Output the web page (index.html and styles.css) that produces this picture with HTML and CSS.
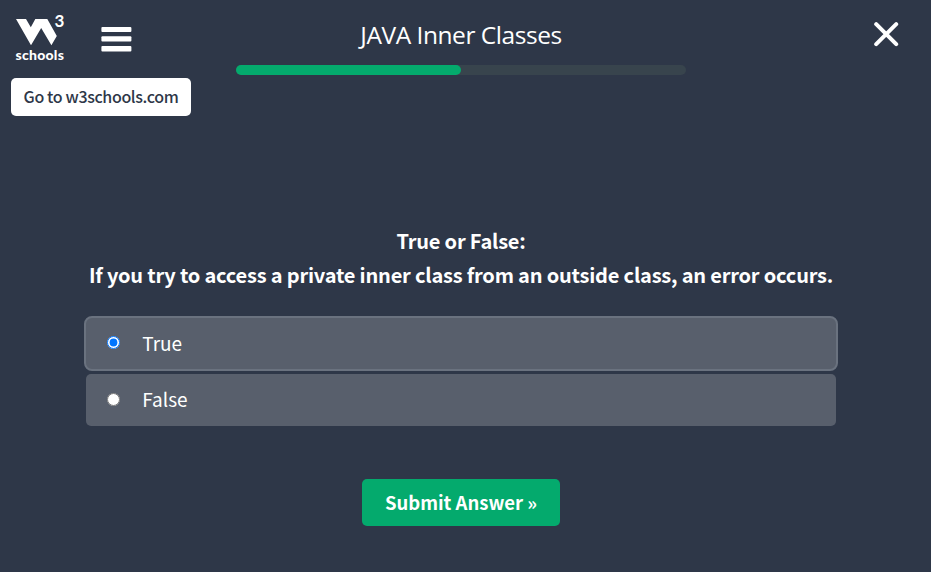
FILE: index.html
```html
<!DOCTYPE html>
<html lang="en">
<head>
<meta charset="utf-8">
<title>JAVA Inner Classes</title>
<link rel="stylesheet" href="styles.css">
</head>
<body>
<header class="header">
  <div class="brand">
    <a class="logo" aria-label="w3schools">
      <svg class="logo-mark" width="50" height="32" viewBox="0 0 50 32" aria-hidden="true">
        <path fill="#fff" d="M0 5h10l4.8 8.2L19.3 5h12l9.5 17-5.4 9.3L25.2 14 15 31.3z"/>
      </svg>
      <span class="logo-three">3</span>
      <span class="logo-name">schools</span>
    </a>
    <svg class="menu" width="31" height="25" viewBox="0 0 31 25" aria-label="Menu">
      <g fill="#fff"><rect x=".4" width="30" height="5" rx="1"/><rect x=".4" y="9.2" width="30" height="5.4" rx="1"/><rect x=".4" y="19" width="30" height="5.6" rx="1"/></g>
    </svg>
  </div>
  <div class="heading">
    <h1 class="title">JAVA Inner Classes</h1>
    <div class="progress"><div class="progress-fill"></div></div>
  </div>
  <svg class="close" width="25" height="25" viewBox="0 0 25 25" aria-label="Close">
    <path stroke="#fff" stroke-width="4" stroke-linecap="round" d="M2.2 2.2l20 20M22.2 2.2l-20 20"/>
  </svg>
</header>
<a class="home-link"><span>Go to w3schools.com</span></a>
<main class="quiz">
  <p class="question"><span class="lead">True or False:</span><br><span class="statement">If you try to access a private inner class from an outside class, an error occurs.</span></p>
  <label class="answer selected"><input class="radio" type="radio" name="answer" checked><span>True</span></label>
  <label class="answer"><input class="radio" type="radio" name="answer"><span>False</span></label>
  <button class="submit"><span>Submit Answer »</span></button>
</main>
</body>
</html>
```
FILE: styles.css
```css
* { box-sizing: border-box; }
body {
  margin: 0;
  height: 572px;
  overflow: hidden;
  background: #2e3748;
  color: #fff;
  font-family: "Noto Sans CJK SC", "Noto Sans", sans-serif;
}
.header {
  height: 78px;
  display: grid;
  grid-template-columns: 236px 450px 1fr;
}
.brand { display: flex; padding: 14px 0 0 16px; }
.logo { position: relative; width: 50px; height: 50px; margin-right: 35px; }
.logo-mark { display: block; }
.logo-three {
  position: absolute;
  left: 38.5px;
  top: -5px;
  font: 700 17px/24px Lato, sans-serif;
}
.logo-name {
  display: block;
  margin-left: -.5px;
  font: 900 14px/17px Lato, sans-serif;
  letter-spacing: .25px;
}
.menu { margin-top: 13px; }
.title {
  margin: 0;
  padding-top: 16px;
  height: 65px;
  font: 400 24.5px/38px "Open Sans", sans-serif;
  letter-spacing: -.46px;
  text-align: center;
}
.progress { height: 10px; border-radius: 5px; background: #38444d; }
.progress-fill { width: 50%; height: 10px; border-radius: 5px; background: #04aa6d; }
.close { justify-self: end; margin: 22px 32px 0 0; }
.home-link {
  display: flex;
  align-items: center;
  justify-content: center;
  width: 180px;
  height: 38px;
  margin-left: 11px;
  padding-bottom: 2px;
  border-radius: 5px;
  background: #fff;
  color: #2e3748;
  font-size: 16px;
  font-weight: 500;
  letter-spacing: -.37px;
  white-space: nowrap;
}
.quiz { width: 754px; margin: 108px 0 0 84px; }
.question {
  margin: 0;
  height: 92px;
  font-size: 20px;
  line-height: 34px;
  font-weight: 700;
  letter-spacing: -.195px;
  text-align: center;
  white-space: nowrap;
}
.answer {
  display: flex;
  align-items: center;
  height: 52px;
  margin: 0 2px;
  padding-bottom: 3px;
  border-radius: 5px;
  background: #585f6c;
  font-size: 19px;
}
.answer.selected {
  height: 55px;
  margin: 0 0 3px;
  border: 2px solid #6a727f;
  border-radius: 8px;
}
.radio { width: 13px; height: 13px; margin: 1px 22.3px 0 21px; }
.submit {
  display: flex;
  align-items: center;
  justify-content: center;
  width: 198px;
  height: 47px;
  margin: 53px auto 0;
  padding: 0;
  border: 0;
  border-radius: 5px;
  background: #04aa6d;
  color: #fff;
  font: 700 18.5px/47px "Noto Sans CJK SC", sans-serif;
  white-space: nowrap;
}
```
